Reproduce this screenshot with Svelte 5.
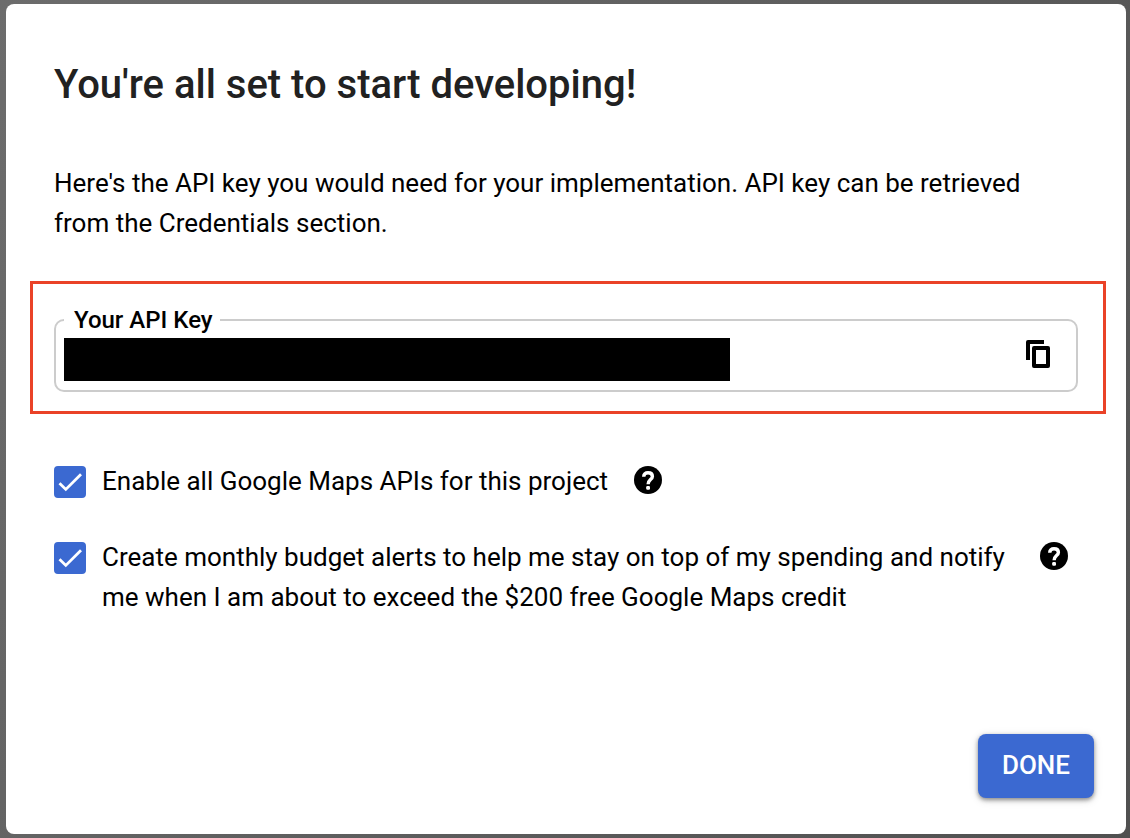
<script>
  let enableApis = $state(true);
  let budgetAlerts = $state(true);
  let open = $state(true);

  function copyKey() {
    navigator.clipboard?.writeText('');
  }
</script>

{#snippet tick()}
  <svg class="tick" viewBox="0 0 32 32" aria-hidden="true">
    <path d="M5.5 17.2 L11.8 23.4 L27 8.2" fill="none" stroke="#fff" stroke-width="2.8" />
  </svg>
{/snippet}

{#snippet help(label)}
  <button class="icon help" type="button" aria-label={label}>
    <svg width="28" height="28" viewBox="0 0 28 28" aria-hidden="true">
      <circle cx="14" cy="14" r="14" />
      <path
        d="M9.700 10.700C9.700 8.200 11.400 6.800 14 6.800C16.700 6.800 18.400 8.200 18.400 10.400C18.400 13.600 14.100 13.700 14.100 18.200"
        fill="none"
        stroke="#fff"
        stroke-width="3.400"
      />
      <rect x="12.200" y="20" width="3.800" height="3.800" rx="1.200" fill="#fff" />
    </svg>
  </button>
{/snippet}

<div class="backdrop">
  {#if open}
    <div class="dialog" role="dialog" aria-labelledby="title">
      <h1 id="title">You're all set to start developing!</h1>
      <p>
        Here's the API key you would need for your implementation. API key can be retrieved from the
        Credentials section.
      </p>

      <div class="highlight">
        <fieldset>
          <legend><label for="api-key">Your API Key</label></legend>
          <div class="key-row">
            <input id="api-key" class="key" type="text" readonly />
            <button class="icon copy" type="button" aria-label="Copy" onclick={copyKey}>
              <svg width="24" height="28" viewBox="0 0 24 28" aria-hidden="true">
                <path d="M18 0H2Q0 0 0 2V20H4V4H18Z" />
                <path
                  fill-rule="evenodd"
                  d="M8 6H22Q24 6 24 8V26Q24 28 22 28H8Q6 28 6 26V8Q6 6 8 6ZM10 10V24H20V10Z"
                />
              </svg>
            </button>
          </div>
        </fieldset>
      </div>

      <div class="options">
        <div class="option">
          <span class="box">
            <input id="apis" type="checkbox" bind:checked={enableApis} />
            {@render tick()}
          </span>
          <label for="apis">Enable all Google Maps APIs for this project</label>
          {@render help('About enabling APIs')}
        </div>
        <div class="option">
          <span class="box">
            <input id="alerts" type="checkbox" bind:checked={budgetAlerts} />
            {@render tick()}
          </span>
          <label class="wide" for="alerts">
            Create monthly budget alerts to help me stay on top of my spending and notify me when I am
            about to exceed the $200 free Google Maps credit
          </label>
          {@render help('About budget alerts')}
        </div>
      </div>

      <footer>
        <button class="done" type="button" onclick={() => (open = false)}>DONE</button>
      </footer>
    </div>
  {/if}
</div>

<style>
  :global(body) {
    margin: 0;
  }

  .backdrop {
    box-sizing: border-box;
    display: flex;
    min-height: 100vh;
    padding: 4px 4px 4px 6px;
    background: linear-gradient(120deg, #6c6c6c, #505050);
    color: #000;
    font: 400 26px/40px Roboto, sans-serif;
  }

  .dialog {
    box-sizing: border-box;
    display: flex;
    flex: 1;
    flex-direction: column;
    padding: 57px 20px 36px 24px;
    border-radius: 8px;
    background: #fff;
  }

  h1 {
    margin: 0 24px;
    color: #212121;
    font-size: 40px;
    font-weight: 500;
    line-height: 48px;
  }

  p {
    margin: 54px 24px 38px;
  }

  .highlight {
    padding: 22px 25px 19px 21px;
    border: 3px solid #ea4228;
  }

  fieldset {
    min-width: 0;
    margin: 0;
    padding: 0 26px 9px 8px;
    border: 2px solid #ccc;
    border-radius: 10px;
  }

  legend {
    padding: 0 7px 0 10px;
    font-size: 24px;
    font-weight: 500;
    line-height: 28px;
  }

  .key-row {
    display: flex;
    align-items: flex-start;
    justify-content: space-between;
    padding-top: 4px;
  }

  .key {
    box-sizing: border-box;
    flex: 0 1 666px;
    min-width: 0;
    height: 43px;
    padding: 0 8px;
    border: 0;
    outline: 0;
    background: #000;
    color: #000;
    font: inherit;
  }

  .icon {
    display: flex;
    flex: none;
    padding: 0;
    border: 0;
    background: none;
    cursor: pointer;
  }

  .copy {
    margin-top: 2px;
  }

  .options {
    display: grid;
    gap: 36px;
    margin: 47px 24px 0;
  }

  .option {
    display: flex;
    align-items: flex-start;
  }

  .box {
    display: grid;
    flex: none;
    margin: 5px 16px 0 0;
  }

  .box input,
  .tick {
    grid-area: 1 / 1;
    width: 32px;
    height: 32px;
    margin: 0;
  }

  .box input {
    appearance: none;
    border: 2px solid #757575;
    border-radius: 4px;
  }

  .box input:checked {
    border-color: #3b69d1;
    background: #3b69d1;
  }

  .tick {
    pointer-events: none;
  }

  .box input:not(:checked) + .tick {
    visibility: hidden;
  }

  .wide {
    flex: 0 1 912px;
  }

  .help {
    margin: 5px 0 0 26px;
  }

  footer {
    display: flex;
    justify-content: flex-end;
    margin-top: auto;
    padding-right: 12px;
  }

  .done {
    height: 64px;
    padding: 0 24px 2px;
    border: 0;
    border-radius: 8px;
    background: #3b69d1;
    box-shadow:
      0 2px 4px rgb(0 0 0 / 40%),
      0 2px 10px rgb(0 0 0 / 14%);
    color: #fff;
    font: 500 26px/40px Roboto, sans-serif;
    cursor: pointer;
  }
</style>
